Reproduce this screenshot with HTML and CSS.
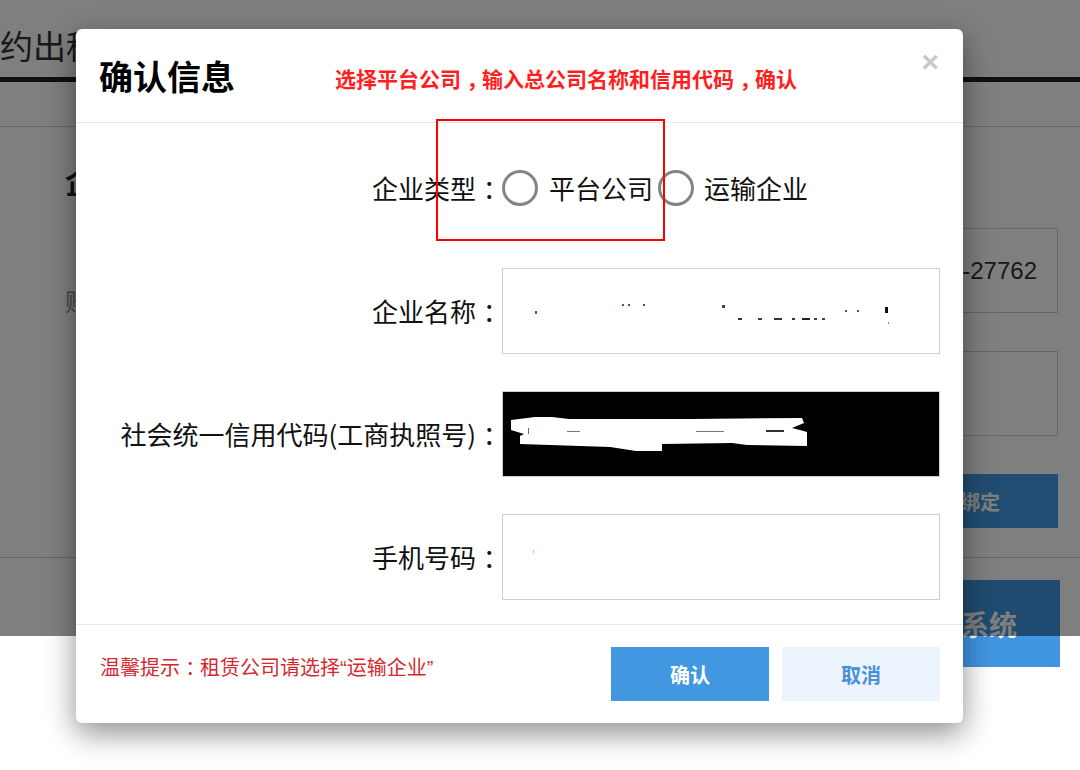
FILE: index.html
```html
<!DOCTYPE html>
<html lang="zh-CN">
<head>
<meta charset="utf-8">
<title>确认信息</title>
<link rel="stylesheet" href="styles.css">
</head>
<body>
<div class="page">
  <header class="bg-header"><h1 class="bg-title">约出租</h1></header>
  <nav class="bg-nav"></nav>
  <main class="bg-main">
    <div class="bg-left">
      <h2 class="bg-heading">企业信息</h2>
      <p class="bg-text">账号绑定说明</p>
    </div>
    <div class="bg-form">
      <div class="bg-input">0571-27762</div>
      <div class="bg-input"></div>
      <button class="bg-bind">确认绑定</button>
    </div>
  </main>
  <div class="bg-foot"><button class="bg-enter">进入系统</button></div>
</div>

<div class="overlay"></div>

<div class="modal">
  <div class="modal-header">
    <h2 class="modal-title">确认信息</h2>
    <span class="modal-note">选择平台公司<span class="punct">，</span>输入总公司名称和信用代码<span class="punct">，</span>确认</span>
    <span class="modal-close">×</span>
  </div>
  <div class="modal-body">
    <div class="form-row">
      <label class="form-label">企业类型<span class="punct">：</span></label>
      <div class="radio-group">
        <span class="radio"></span><span class="radio-text">平台公司</span>
        <span class="radio radio-second"></span><span class="radio-text radio-text-second">运输企业</span>
      </div>
    </div>
    <div class="form-row">
      <label class="form-label">企业名称<span class="punct">：</span></label>
      <div class="field">
        <svg class="marks" viewBox="0 0 438 86" width="438" height="86">
          <rect x="33" y="43" width="2" height="3" fill="#c0392b"/>
          <rect x="120" y="36" width="2" height="2" fill="#b33"/>
          <rect x="126" y="36" width="2" height="2" fill="#555"/>
          <rect x="141" y="36" width="2" height="2" fill="#555"/>
          <rect x="220" y="37" width="3" height="3" fill="#444"/>
          <rect x="236" y="50" width="4" height="2" fill="#333"/>
          <rect x="256" y="50" width="4" height="2" fill="#444"/>
          <rect x="272" y="50" width="8" height="2" fill="#333"/>
          <rect x="290" y="50" width="3" height="2" fill="#333"/>
          <rect x="300" y="50" width="8" height="2" fill="#222"/>
          <rect x="312" y="50" width="3" height="2" fill="#444"/>
          <rect x="320" y="50" width="3" height="2" fill="#444"/>
          <rect x="343" y="42" width="2" height="2" fill="#555"/>
          <rect x="355" y="42" width="2" height="2" fill="#555"/>
          <rect x="383" y="39" width="3" height="6" fill="#111"/>
          <rect x="386" y="54" width="1" height="2" fill="#888"/>
        </svg>
      </div>
    </div>
    <div class="form-row">
      <label class="form-label">社会统一信用代码(工商执照号)<span class="punct">：</span></label>
      <div class="field field-dark">
        <svg class="marks" viewBox="0 0 438 86" width="438" height="86">
          <polygon fill="#fff" points="9,29 33,26 50,26 67,28 190,28 300,27 302,32 290,37 298,39 305,41 305,55 245,54 230,52 160,53 160,60 134,60 108,56 18,53 18,45 22,43 9,39"/>
          <rect x="26" y="37" width="1" height="6" fill="#2a7fd4"/>
          <rect x="65" y="40" width="13" height="1" fill="#777"/>
          <rect x="194" y="40" width="28" height="1" fill="#777"/>
          <rect x="264" y="39" width="18" height="2" fill="#333"/>
        </svg>
      </div>
    </div>
    <div class="form-row">
      <label class="form-label">手机号码<span class="punct">：</span></label>
      <div class="field">
        <svg class="marks" viewBox="0 0 438 86" width="438" height="86">
          <rect x="31" y="36" width="1" height="3" fill="#f0c060"/>
        </svg>
      </div>
    </div>
  </div>
  <div class="modal-footer">
    <p class="tip">温馨提示<span class="punct">：</span>租赁公司请选择<span class="quote">“</span>运输企业<span class="quote">”</span></p>
    <div class="actions">
      <button class="btn btn-primary">确认</button>
      <button class="btn btn-light">取消</button>
    </div>
  </div>
  <div class="highlight"></div>
</div>
</body>
</html>
```

FILE: styles.css
```css
* { box-sizing: border-box; }

html, body {
  margin: 0;
  padding: 0;
}

body {
  width: 1080px;
  height: 770px;
  overflow: hidden;
  position: relative;
  background: #fff;
  font-family: "Noto Sans CJK SC", "Microsoft YaHei", sans-serif;
  color: #222;
}

/* full-width punctuation drawn centred in its cell, as in the reference font */
.punct {
  margin-left: 0.26em;
  letter-spacing: -0.26em;
}

.quote {
  font-family: "Liberation Sans", Arial, sans-serif;
}

/* ---------- background page ---------- */
.page {
  width: 1080px;
}

.bg-header {
  height: 82px;
  border-bottom: 5px solid #162230;
}

.bg-title {
  margin: 0;
  padding-top: 27px;
  font-size: 33px;
  line-height: 36px;
  font-weight: 400;
  color: #333;
  white-space: nowrap;
}

.bg-nav {
  height: 45px;
  border-bottom: 1px solid #ccc;
}

.bg-main {
  display: grid;
  grid-template-columns: 1fr 498px;
  padding: 0 22px 29px 65px;
}

.bg-heading {
  margin: 35px 0 0;
  font-size: 30px;
  line-height: 36px;
  font-weight: 700;
  color: #222;
}

.bg-text {
  margin: 90px 0 0;
  font-size: 24px;
  line-height: 26px;
  color: #888;
}

.bg-form {
  display: flex;
  flex-direction: column;
  padding-top: 101px;
}

.bg-input {
  height: 85px;
  margin-bottom: 38px;
  border: 1px solid #ccc;
  padding-right: 20px;
  text-align: right;
  font-family: "Liberation Sans", Arial, sans-serif;
  font-size: 24px;
  line-height: 83px;
  color: #333;
}

.bg-bind {
  align-self: flex-end;
  width: 196px;
  height: 54px;
  border: 0;
  background: #429ae4;
  color: #fff;
  font-family: inherit;
  font-size: 20px;
  font-weight: 700;
}

.bg-foot {
  border-top: 1px solid #ccc;
  padding: 22px 20px 0 0;
  display: flex;
  justify-content: flex-end;
}

.bg-enter {
  width: 198px;
  height: 87px;
  border: 0;
  background: #4096e0;
  color: #fff;
  font-family: inherit;
  font-size: 28px;
  font-weight: 700;
}

/* ---------- overlay ---------- */
.overlay {
  position: absolute;
  left: 0;
  top: 0;
  width: 1080px;
  height: 636px;
  background: rgba(0, 0, 0, 0.5);
}

/* ---------- modal ---------- */
.modal {
  position: absolute;
  left: 76px;
  top: 29px;
  width: 887px;
  background: #fff;
  border-radius: 6px;
  box-shadow: 0 10px 30px rgba(0, 0, 0, 0.45);
}

.modal-header {
  height: 94px;
  border-bottom: 1px solid #e5e5e5;
  display: flex;
  align-items: center;
  padding-left: 23px;
}

.modal-title {
  margin: 0;
  font-size: 34px;
  line-height: 40px;
  font-weight: 700;
  color: #000;
}

.modal-note {
  margin: 4px 0 0 100px;
  font-size: 21px;
  line-height: 28px;
  font-weight: 700;
  color: #ff1f1f;
}

.modal-close {
  margin-left: auto;
  margin-right: 24px;
  align-self: flex-start;
  margin-top: 18px;
  font-family: "Liberation Sans", Arial, sans-serif;
  font-size: 30px;
  line-height: 30px;
  font-weight: 700;
  color: #c8c8c8;
}

.modal-body {
  padding: 22px 23px 24px 0;
  display: flex;
  flex-direction: column;
  gap: 37px;
}

.form-row {
  display: grid;
  grid-template-columns: 426px 438px;
  height: 86px;
  align-items: center;
}

.form-label {
  text-align: right;
  font-size: 26px;
  line-height: 34px;
  color: #111;
  white-space: nowrap;
}

.radio-group {
  display: flex;
  align-items: center;
}

.radio {
  width: 36px;
  height: 36px;
  border: 3px solid #858585;
  border-radius: 50%;
  flex: none;
}

.radio-text {
  margin-left: 11px;
  font-size: 26px;
  line-height: 34px;
  color: #111;
}

.radio-second {
  margin-left: 5px;
}

.radio-text-second {
  margin-left: 10px;
}

.field {
  height: 86px;
  border: 1px solid #cfcfcf;
  background: #fff;
  overflow: hidden;
}

.field-dark {
  background: #000;
}

.marks {
  display: block;
  margin: -1px;
}

.modal-footer {
  border-top: 1px solid #e5e5e5;
  padding: 22px 23px 22px 24px;
  display: flex;
  align-items: flex-start;
  justify-content: space-between;
}

.tip {
  margin: 8px 0 0;
  font-size: 20px;
  line-height: 24px;
  color: #d42a2f;
}

.actions {
  display: flex;
  gap: 13px;
}

.btn {
  width: 158px;
  height: 54px;
  border: 0;
  font-family: inherit;
  font-size: 20px;
  font-weight: 700;
}

.btn-primary {
  background: #4298e0;
  color: #fff;
}

.btn-light {
  background: #ebf3fc;
  color: #4a90d9;
}

.highlight {
  position: absolute;
  left: 360px;
  top: 90px;
  width: 229px;
  height: 122px;
  border: 2px solid #ff0000;
}
```
